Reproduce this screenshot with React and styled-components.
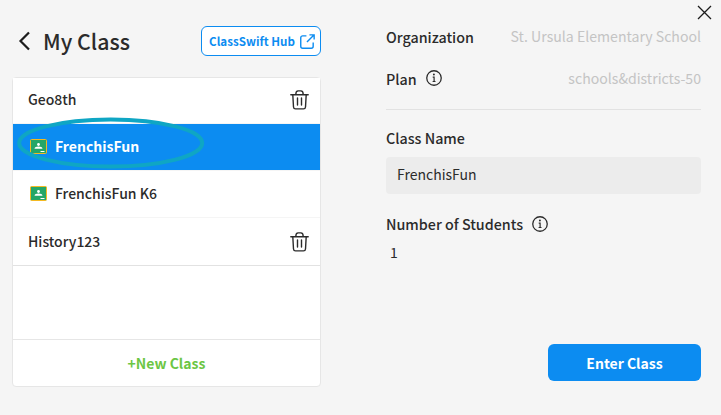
import React from 'react'
import styled, { createGlobalStyle } from 'styled-components'

const GlobalStyle = createGlobalStyle`
html, body {
  margin: 0;
  padding: 0;
  background: #f5f5f5;
}
* {
  box-sizing: border-box;
}
`

function Trash() {
  return (
    <TrashIcon width="19" height="20" viewBox="0 0 19 20" fill="none" stroke="#2b2b2b" strokeWidth="1.400" aria-label="delete">
      <path d="M.8 4.700h17.400" strokeLinecap="round" />
      <path d="M5.800 4.500c0-2 1-3.600 2.300-3.600h2.800c1.300 0 2.300 1.600 2.300 3.600" />
      <path d="M2.800 4.700l.7 12.300c.1 1.200.8 1.900 2 1.900h8c1.200 0 1.900-.7 2-1.900l.7-12.300" />
      <path d="M7.500 8v7M11.500 8v7" strokeLinecap="round" />
    </TrashIcon>
  )
}

function ClassroomLogo() {
  return (
    <LogoIcon width="17" height="15" viewBox="0 0 17 15" aria-label="google classroom">
      <rect x="0.500" y="0.500" width="16" height="14" rx="1" fill="#25a667" stroke="#f5b921" />
      <circle cx="8.500" cy="5.500" r="1.400" fill="#fff" />
      <path d="M4.500 9.800c0-1.500 1.800-2.300 4-2.300s4 .8 4 2.300z" fill="#fff" />
      <rect x="10.500" y="12" width="4" height="1" fill="#fff" />
    </LogoIcon>
  )
}

function Info() {
  return (
    <svg width="16" height="16" viewBox="0 0 15 15" fill="none" stroke="#2b2b2b" aria-label="info">
      <circle cx="7.500" cy="7.500" r="6.800" strokeWidth="1.200" />
      <path d="M6.300 6.700h1.300v4M6.200 10.800h2.700" strokeWidth="1.100" />
      <circle cx="7.400" cy="4.200" r="0.900" fill="#2b2b2b" stroke="none" />
    </svg>
  )
}

function App() {
  return (
    <Page>
      <GlobalStyle />
      <Close aria-label="close">
        <svg width="15" height="15" viewBox="0 0 15 15" stroke="#1c1c1c" strokeWidth="1.300" fill="none">
          <path d="M1 1l13 13M14 1L1 14" />
        </svg>
      </Close>

      <Left>
        <Header>
          <HeaderTitle>
            <svg width="13" height="20" viewBox="0 0 13 20" fill="none" stroke="#1c1c1c" strokeWidth="2.200">
              <path d="M11 1.500L2.500 10l8.500 8.500" />
            </svg>
            <Title>My Class</Title>
          </HeaderTitle>
          <HubButton>
            ClassSwift Hub
            <svg width="15" height="15" viewBox="0 0 14 14" fill="none" stroke="#0c8cf1" strokeWidth="1.300">
              <path d="M6 1.700H2.500c-1 0-1.800.8-1.800 1.800v8c0 1 .8 1.800 1.800 1.800h8c1 0 1.800-.8 1.800-1.800V8" />
              <path d="M6.500 7.500L13 1M8.800 .8h4.400v4.400" />
            </svg>
          </HubButton>
        </Header>

        <ClassList>
          <Rows>
            <Row $first>
              <RowName>Geo8th</RowName>
              <Trash />
            </Row>
            <Row $active>
              <ClassroomLogo />
              <RowName $active>FrenchisFun</RowName>
              <Ellipse width="190" height="54" viewBox="0 0 190 54" fill="none">
                <ellipse cx="93.700" cy="26" rx="91.500" ry="23.500" stroke="#0fa6c4" strokeWidth="4" />
              </Ellipse>
            </Row>
            <Row>
              <ClassroomLogo />
              <RowName>FrenchisFun K6</RowName>
            </Row>
            <Row $last>
              <RowName>History123</RowName>
              <Trash />
            </Row>
          </Rows>
          <NewClass>+New Class</NewClass>
        </ClassList>
      </Left>

      <Right>
        <InfoRow>
          <Label>Organization</Label>
          <InfoValue>St. Ursula Elementary School</InfoValue>
        </InfoRow>
        <PlanRow>
          <LabelGroup>
            <Label>Plan</Label>
            <Info />
          </LabelGroup>
          <InfoValue>schools&amp;districts-50</InfoValue>
        </PlanRow>
        <Divider />
        <Label>Class Name</Label>
        <NameField>FrenchisFun</NameField>
        <StudentsGroup>
          <Label>Number of Students</Label>
          <Info />
        </StudentsGroup>
        <StudentCount>1</StudentCount>
        <Footer>
          <EnterButton>Enter Class</EnterButton>
        </Footer>
      </Right>
    </Page>
  )
}

export default App

const fontStack = `"Noto Sans CJK TC", "Noto Sans", sans-serif`

const Page = styled.div`
position: relative;
width: 721px;
height: 415px;
display: flex;
gap: 65px;
padding: 24px 20px 28px 12px;
background: #f5f5f5;
color: #2b2b2b;
font-family: ${fontStack};
overflow: hidden;
`

const Close = styled.button`
position: absolute;
top: 5px;
right: 9px;
width: 15px;
height: 15px;
padding: 0;
border: 0;
background: none;
display: flex;
`

const Left = styled.div`
width: 309px;
padding-top: 2px;
display: flex;
flex-direction: column;
`

const Header = styled.div`
height: 30px;
margin-bottom: 21px;
display: flex;
align-items: center;
justify-content: space-between;
`

const HeaderTitle = styled.div`
display: flex;
align-items: center;
gap: 12px;
padding-left: 6px;
`

const Title = styled.h1`
margin: 0;
padding-bottom: 1px;
font-size: 21.300px;
font-weight: 500;
line-height: 30px;
color: #2b2b2b;
`

const HubButton = styled.button`
width: 120px;
height: 30px;
padding: 0 0 0 2px;
display: flex;
align-items: center;
justify-content: center;
gap: 5px;
border: 1.500px solid #0c8cf1;
border-radius: 6px;
background: #fff;
color: #0c8cf1;
font-family: ${fontStack};
font-size: 11.600px;
font-weight: 700;
`

const ClassList = styled.div`
height: 310px;
flex-shrink: 0;
display: flex;
flex-direction: column;
background: #fff;
border: 1px solid #e6e6e6;
border-radius: 4px;
`

const Rows = styled.div`
flex: 1;
`

const Row = styled.div`
position: relative;
height: ${p => (p.$first ? '46px' : p.$last ? '48px' : '47px')};
padding: 0 11.500px ${p => (p.$first ? '4px' : '2px')} 15px;
display: flex;
align-items: center;
gap: 8px;
background: ${p => (p.$active ? '#0c8cf1' : '#fff')};
border-bottom: 1px solid ${p => (p.$last ? '#e2e2e2' : '#f5f5f5')};
`

const RowName = styled.span`
flex: 1;
font-size: 14px;
font-weight: ${p => (p.$active ? 700 : 500)};
color: ${p => (p.$active ? '#fff' : '#2b2b2b')};
`

const TrashIcon = styled.svg`
flex-shrink: 0;
margin-top: 2px;
`

const LogoIcon = styled.svg`
flex-shrink: 0;
margin-left: 2px;
`

const Ellipse = styled.svg`
position: absolute;
top: -7px;
left: 4px;
`

const NewClass = styled.div`
height: 47px;
flex-shrink: 0;
display: flex;
align-items: center;
justify-content: center;
border-top: 1px solid #e6e6e6;
color: #6cc644;
font-size: 14px;
font-weight: 700;
`

const Right = styled.div`
flex: 1;
padding-bottom: 6px;
display: flex;
flex-direction: column;
`

const InfoRow = styled.div`
height: 24px;
flex-shrink: 0;
display: flex;
align-items: center;
justify-content: space-between;
`

const PlanRow = styled(InfoRow)`
margin-top: 18px;
`

const LabelGroup = styled.div`
display: flex;
align-items: center;
gap: 9px;
`

const StudentsGroup = styled(LabelGroup)`
margin-top: 19px;
height: 21px;
`

const Label = styled.div`
font-size: 14.300px;
font-weight: 500;
line-height: 21px;
color: #2b2b2b;
`

const InfoValue = styled.span`
font-size: 14.100px;
color: #c4c4c4;
`

const Divider = styled.hr`
width: 100%;
margin: 19px 0 17px;
border: 0;
border-top: 1px solid #e2e2e2;
`

const NameField = styled.div`
height: 37px;
margin-top: 9px;
padding: 0 0 4px 11px;
display: flex;
align-items: center;
background: #ececec;
border-radius: 4px;
font-size: 14px;
`

const StudentCount = styled.div`
margin-top: 8px;
padding-left: 4px;
font-size: 14px;
line-height: 21px;
`

const Footer = styled.div`
margin-top: auto;
display: flex;
justify-content: flex-end;
`

const EnterButton = styled.button`
width: 153px;
height: 37px;
border: 0;
border-radius: 6px;
background: #0c8cf1;
color: #fff;
font-family: ${fontStack};
font-size: 14px;
font-weight: 700;
`
